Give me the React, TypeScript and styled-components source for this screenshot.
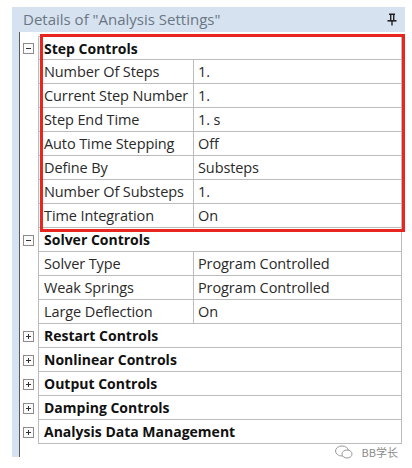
import React from "react";
import styled, { createGlobalStyle } from "styled-components";

const Global = createGlobalStyle`
  html, body { margin: 0; padding: 0; background: #ffffff; }
  body { font-family: "Open Sans", "Noto Sans", "Noto Sans CJK SC", sans-serif; }
  * { box-sizing: border-box; }
`;

const Page = styled.div`
  width: 412px;
  height: 468px;
  padding: 7px 7px 0 12px;
  background: #ffffff;
`;

const Window = styled.div`
  display: flex;
  flex-direction: column;
  width: 393px;
`;

const TitleBar = styled.div`
  height: 25px;
  background: #d6e2ef;
  display: flex;
  align-items: center;
  justify-content: space-between;
  padding: 0 8px 0 11px;
  color: #6a7684;
  font-size: 15px;
  line-height: 1;
`;

const Body = styled.div`
  display: flex;
`;

const Strip = styled.div`
  width: 8px;
  background: #d6e2ef;
  border-right: 1px solid #5a5a5a;
  flex-shrink: 0;
`;

const Content = styled.div`
  flex: 1;
  display: flex;
  flex-direction: column;
  padding-right: 3px;
`;

const Grid = styled.div`
  position: relative;
  display: grid;
  grid-template-columns: 18px 155px 1fr;
  padding-top: 4px;
  background: #ffffff;
`;

const Expander = styled.div`
  height: 24px;
  display: flex;
  align-items: center;
  padding-left: 3px;
`;

const Box = styled.div<{ open: boolean }>`
  width: 11px;
  height: 11px;
  border: 1px solid #8c8c8c;
  background: #fbfbfb;
  position: relative;
  &::before {
    content: "";
    position: absolute;
    left: 2px;
    right: 2px;
    top: 4px;
    height: 1px;
    background: #333;
  }
  &::after {
    content: "";
    display: ${(p) => (p.open ? "none" : "block")};
    position: absolute;
    top: 2px;
    bottom: 2px;
    left: 4px;
    width: 1px;
    background: #333;
  }
`;

const Cell = styled.div<{ first?: boolean; span?: boolean; value?: boolean; bold?: boolean }>`
  height: 24px;
  display: flex;
  align-items: center;
  grid-column: ${(p) => (p.span ? "2 / 4" : "auto")};
  border-bottom: 1px solid #bcbcbc;
  border-top: ${(p) => (p.first ? "1px solid #bcbcbc" : "none")};
  border-left: 1px solid #bcbcbc;
  border-right: ${(p) => (p.value || p.span ? "1px solid #bcbcbc" : "none")};
  padding-left: ${(p) => (p.value ? "4px" : "5px")};
  font-size: ${(p) => (p.bold ? "14px" : "14.5px")};
  letter-spacing: ${(p) => (p.bold ? "0" : "-0.1px")};
  font-weight: ${(p) => (p.bold ? 700 : 400)};
  color: ${(p) => (p.bold ? "#111" : "#2a2a2a")};
  white-space: nowrap;
  overflow: hidden;
`;

const Highlight = styled.div`
  position: absolute;
  left: 20px;
  top: 2px;
  width: 365px;
  height: 198px;
  border: 3px solid #e8261f;
  pointer-events: none;
`;

const Footer = styled.div`
  height: 13px;
  position: relative;
`;

const Watermark = styled.div`
  position: absolute;
  right: 4px;
  top: 1px;
  display: flex;
  align-items: center;
  gap: 8px;
  color: #8a8a8a;
  font-size: 11px;
  line-height: 1;
  font-family: "Noto Sans CJK SC", "Noto Sans", sans-serif;
`;

type Row =
  | { kind: "group"; label: string; open: boolean }
  | { kind: "prop"; name: string; value: string };

const rows: Row[] = [
  { kind: "group", label: "Step Controls", open: true },
  { kind: "prop", name: "Number Of Steps", value: "1." },
  { kind: "prop", name: "Current Step Number", value: "1." },
  { kind: "prop", name: "Step End Time", value: "1. s" },
  { kind: "prop", name: "Auto Time Stepping", value: "Off" },
  { kind: "prop", name: "Define By", value: "Substeps" },
  { kind: "prop", name: "Number Of Substeps", value: "1." },
  { kind: "prop", name: "Time Integration", value: "On" },
  { kind: "group", label: "Solver Controls", open: true },
  { kind: "prop", name: "Solver Type", value: "Program Controlled" },
  { kind: "prop", name: "Weak Springs", value: "Program Controlled" },
  { kind: "prop", name: "Large Deflection", value: "On" },
  { kind: "group", label: "Restart Controls", open: false },
  { kind: "group", label: "Nonlinear Controls", open: false },
  { kind: "group", label: "Output Controls", open: false },
  { kind: "group", label: "Damping Controls", open: false },
  { kind: "group", label: "Analysis Data Management", open: false },
];

const Pin = () => (
  <svg width="10" height="13" viewBox="0 0 10 13">
    <rect x="2" y="0.5" width="6" height="1.5" fill="#222" />
    <rect x="3" y="1.5" width="1.4" height="6" fill="#222" />
    <rect x="6" y="1.5" width="1.4" height="6" fill="#222" />
    <rect x="0.5" y="7" width="9" height="1.6" fill="#222" />
    <rect x="4.3" y="8" width="1.4" height="4.5" fill="#222" />
  </svg>
);

const Bubbles = () => (
  <svg width="20" height="14" viewBox="0 0 20 14">
    <ellipse cx="8" cy="6" rx="6.5" ry="5" fill="none" stroke="#9a9a9a" strokeWidth="1" />
    <ellipse cx="13" cy="9" rx="5" ry="4" fill="#fff" stroke="#9a9a9a" strokeWidth="1" />
  </svg>
);

export default function App() {
  return (
    <Page>
      <Global />
      <Window>
        <TitleBar>
          <span>Details of "Analysis Settings"</span>
          <Pin />
        </TitleBar>
        <Body>
          <Strip />
          <Content>
            <Grid>
              {rows.map((r, i) =>
                r.kind === "group" ? (
                  <React.Fragment key={i}>
                    <Expander>
                      <Box open={r.open} />
                    </Expander>
                    <Cell span bold first={i === 0}>
                      {r.label}
                    </Cell>
                  </React.Fragment>
                ) : (
                  <React.Fragment key={i}>
                    <Expander />
                    <Cell>{r.name}</Cell>
                    <Cell value>{r.value}</Cell>
                  </React.Fragment>
                )
              )}
              <Highlight />
            </Grid>
            <Footer>
              <Watermark>
                <Bubbles />
                <span>BB学长</span>
              </Watermark>
            </Footer>
          </Content>
        </Body>
      </Window>
    </Page>
  );
}
